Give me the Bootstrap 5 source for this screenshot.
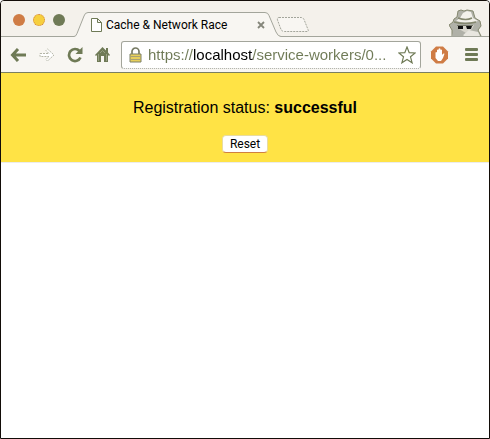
<!DOCTYPE html>
<html lang="en">
<head>
<meta charset="utf-8">
<meta name="viewport" content="width=device-width, initial-scale=1">
<title>Cache &amp; Network Race</title>
<link href="https://cdn.jsdelivr.net/npm/bootstrap@5.3.0/dist/css/bootstrap.min.css" rel="stylesheet">
<style>
:root { --olive: #6f7a56; --line: #a3a59b; --cream: #f4f1eb; --toolbar: #f8f6f2; --sun: #ffe345; }
body { font-family: Roboto, "Liberation Sans", sans-serif; }
.window { border: 1px solid #120c08; border-radius: 4px 4px 0 0; }
.strip { height: 36px; background: var(--cream); box-shadow: inset 0 -1px var(--line); padding-left: 12px; }
.lights { gap: 8px; padding-top: 13px; }
.light { width: 12px; height: 12px; }
.light-close { background: #cf7c45; }
.light-min { background: #f6cf3e; border: 1px dotted #cf7c45 !important; }
.light-max { background: var(--olive); }
.tab { width: 210px; height: 36px; margin-left: 8px; padding: 12px 18px 0 18px; font-size: 12px; color: #000; }
.tab-shape { z-index: 0; }
.tab > :not(.tab-shape) { position: relative; z-index: 1; }
.new-tab { margin-top: 15px; margin-left: -7px; height: 18px; }
.spy { margin: 8px 6px 0 auto; height: 27px; }
.plain { background: none; border: 0; padding: 0; line-height: 0; color: var(--olive); display: block; }
.bar { height: 36px; padding: 0 11px 0 9px; background: var(--toolbar); border-bottom: 1px solid #7a7f60; }
.nav-tools { width: 100px; }
.omnibox { height: 28px; padding: 0 4px 0 7px; background: #fff; border: 1px solid var(--line); border-bottom-style: dotted; border-radius: 3px; margin-left: 11px; margin-right: 9px; }
.address { min-width: 0; height: 24px; margin-left: 6px; padding: 0; border: 0; font: 15px/24px "Liberation Sans", Arial, sans-serif; color: transparent; caret-color: #000;
  background: linear-gradient(to right, var(--olive) 46px, #000 46px 105px, var(--olive) 105px); -webkit-background-clip: text; background-clip: text; }
.notice { background: var(--sun); color: #000; padding: 24px 12px 9px; border-bottom: 1px solid #ececec; font: 16px/22px "Liberation Sans", Arial, sans-serif; }
.reset { display: block; margin: 16px auto 0; padding: 0 7px; font: 12px/16px Roboto, sans-serif; color: #000; background: #fff; border: 1px solid #e8dca0; border-bottom-color: #d08040; border-radius: 4px; }
</style>
</head>
<body class="m-0 bg-white">
<div class="window d-flex flex-column vh-100 overflow-hidden">
  <header>
    <div class="strip d-flex align-items-start">
      <div class="lights d-flex">
        <button type="button" class="light light-close rounded-circle border-0 p-0" aria-label="Close"></button>
        <button type="button" class="light light-min rounded-circle p-0" aria-label="Minimize"></button>
        <button type="button" class="light light-max rounded-circle border-0 p-0" aria-label="Zoom"></button>
      </div>
      <div class="tab position-relative d-flex align-items-center">
        <svg class="tab-shape position-absolute top-0 start-0" width="210" height="36" aria-hidden="true"><path d="M0 35.5h1q2 0 3-3L11 15q1-3.500 4-3.500H192q3 0 4 3L203 31q2 4.500 5 4.500h2V36H0z" fill="#f8f6f2"/><path d="M0 35.500h1q2 0 3-3L11 15q1-3.500 4-3.500H192q3 0 4 3L203 31q2 4.500 5 4.500h2" fill="none" stroke="#a3a59b"/></svg>
        <svg width="11" height="14" viewBox="0 0 11 14" fill="#fff" stroke="#6f7a56" aria-hidden="true"><path d="M.5.5h6l4 4v9H.5zM6.500.5v4h4"/></svg>
        <span class="flex-grow-1 text-nowrap ms-1">Cache &amp; Network Race</span>
        <button type="button" class="plain" aria-label="Close tab"><svg width="8" height="8" viewBox="0 0 8 8" stroke="#85867b" stroke-width="1.800"><path d="M1 1l6 6M7 1L1 7"/></svg></button>
      </div>
      <button type="button" class="plain new-tab" aria-label="New tab"><svg width="34" height="18" viewBox="0 0 34 18" fill="#f8f6f2" stroke="#a3a59b"><path d="M3 1.500h22q2 0 3 2l4 10q1 2-1 2H9q-3 0-4-2L1.500 4Q1 1.500 3 1.500z" stroke-dasharray="2 1"/></svg></button>
      <svg class="spy" width="34" height="27" viewBox="0 0 34 27" role="img" aria-label="Incognito"><path d="M9 2l3-1 3 1 3-1 6 1 2 7 5 3 1 5-3 4 3 6H3V21L0 16l4-3 1-3 3-2z" fill="#b0b1a8" stroke="#85886f"/><path d="M11 9l3-5 4-2 4 1 2 6 5 3q-11 3-22 0z" fill="#f3f1eb"/><path d="M9 9q8 3 14 0M5 13q11 3 22 0" fill="none" stroke="#85886f" stroke-width="1.500"/><path d="M8 16h17l-2 4-6 4-7-4z" fill="#d8d6cd"/><path d="M9 17h5v3H9zM17 17h6l-1 3h-4z" fill="#111"/><path d="M8 16.500h16" stroke="#77796a"/><path d="M13 27l7-6 9 2 2 4z" fill="#e8e6df"/><path d="M3 27l2-6 5 1 5 5" fill="#b0b1a8"/></svg>
    </div>
    <nav class="bar d-flex align-items-center" aria-label="Browser toolbar">
      <div class="nav-tools d-flex align-items-center justify-content-between flex-shrink-0">
        <button type="button" class="plain" aria-label="Back"><svg width="17" height="14" viewBox="0 0 17 14" fill="none" stroke="currentColor" stroke-width="3"><path d="M16 7H3M8 1L2.500 7 8 13"/></svg></button>
        <button type="button" class="plain" aria-label="Forward" disabled><svg width="16" height="14" viewBox="0 0 16 14" fill="#fff" stroke="#b4b6a8"><path d="M1 5.500h9L7 2.500 8.500 1 15 7l-6.500 6L7 11.500l3-3H1z" stroke-dasharray="2 1"/></svg></button>
        <button type="button" class="plain" aria-label="Reload"><svg width="16" height="16" viewBox="0 0 16 16" fill="none" stroke="currentColor" stroke-width="2.700"><path d="M12.500 4A6 6 0 1 0 13.500 10.500"/><path d="M15.500 0v7H8.500z" fill="currentColor" stroke="none"/></svg></button>
        <button type="button" class="plain" aria-label="Home"><svg width="15" height="15" viewBox="0 0 15 15" fill="currentColor"><path d="M7.500 0L11 3.500V1h2v4.500L15 8l-1 1-1-1v7H9V9H6v6H2V8L1 9 0 8z"/><path d="M3.500 7v7M11.500 7v7M5 6l2.500-2.500L10 6" fill="none" stroke="#979f83"/></svg></button>
      </div>
      <div class="omnibox d-flex align-items-center flex-grow-1">
        <svg class="flex-shrink-0" width="13" height="16" viewBox="0 0 13 16" aria-hidden="true"><path d="M3 8V4.500a3.500 3.500 0 0 1 7 0V8" fill="none" stroke="#777b64" stroke-width="1.700"/><path d="M1 7h11v8H1z" fill="#e7cf5b" stroke="#7d8068"/><path d="M2 9.500h9M2 12.500h9" stroke="#a7a178"/></svg>
        <input class="address flex-grow-1" type="text" aria-label="Address" value="https://localhost/service-workers/0...">
        <button type="button" class="plain flex-shrink-0" aria-label="Bookmark"><svg width="18" height="18" viewBox="0 0 18 18" fill="#fff" stroke="currentColor" stroke-width="1.200"><path d="M9 1l2.200 5.700 6 .3-4.700 3.800 1.600 6L9 13.400l-5.100 3.400 1.600-6L.8 7l6-.3z"/></svg></button>
      </div>
      <button type="button" class="plain flex-shrink-0" aria-label="Content blocker"><svg width="19" height="18" viewBox="0 0 19 18"><path d="M6 .5h7l5 5v7l-5 5H6l-5-5v-7z" fill="#cf7c45"/><path d="M5.500 6.500q1-1 1.500 0V4q1-1 1.500 0V3q1-1.500 2 0v1q1-1 1.500.3V9q1.500-2 2.500-1.300L13 12l-2 3H8l-2.500-3z" fill="#fff"/></svg></button>
      <button type="button" class="plain flex-shrink-0 ms-3" aria-label="Menu"><svg width="13" height="13" viewBox="0 0 13 13" fill="currentColor"><rect width="13" height="3" rx="1"/><rect y="5" width="13" height="3" rx="1"/><rect y="10" width="13" height="3" rx="1"/></svg></button>
    </nav>
  </header>
  <main class="flex-grow-1 bg-white">
    <section class="notice text-center">
      <p class="m-0">Registration status: <strong>successful</strong></p>
      <button type="button" class="reset">Reset</button>
    </section>
  </main>
</div>
<script src="https://cdn.jsdelivr.net/npm/bootstrap@5.3.0/dist/js/bootstrap.bundle.min.js"></script>
</body>
</html>
